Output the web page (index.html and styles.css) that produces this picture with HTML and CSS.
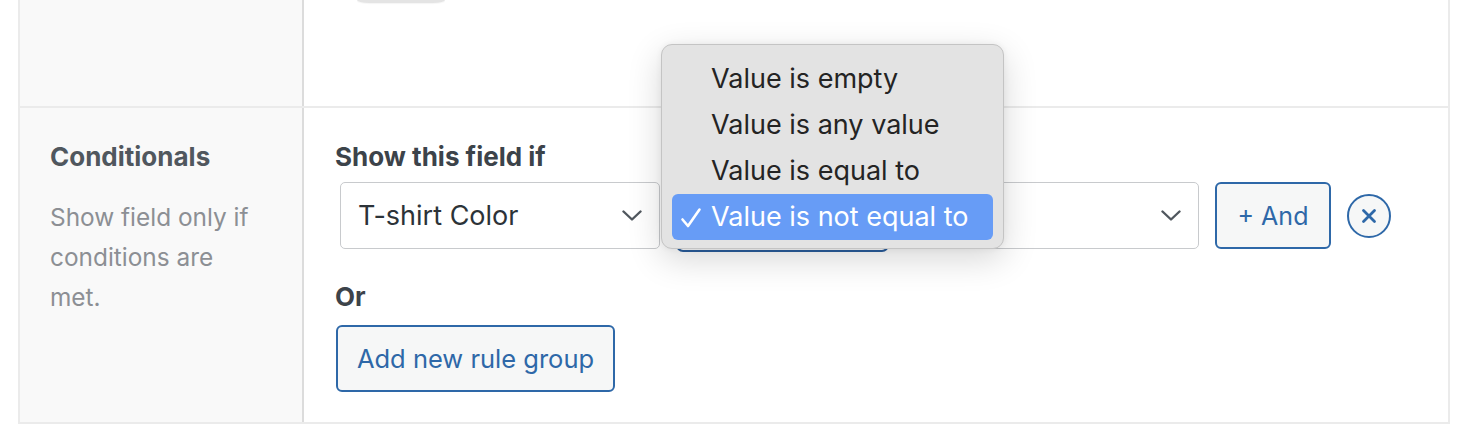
FILE: index.html
```html
<!DOCTYPE html>
<html lang="en">
<head>
<meta charset="utf-8">
<title>Conditionals</title>
<link rel="stylesheet" href="styles.css">
</head>
<body>
<div class="settings-table">
  <div class="row row-top">
    <div class="label-cell"></div>
    <div class="field-cell"><div class="pill-stub"></div></div>
  </div>
  <div class="row row-cond">
    <div class="label-cell">
      <div class="label-title">Conditionals</div>
      <p class="label-desc">Show field only if conditions are met.</p>
    </div>
    <div class="field-cell">
      <div class="group-title">Show this field if</div>
      <div class="rule-row">
        <div class="select select-field">
          <span class="select-text">T-shirt Color</span>
          <svg class="chev" width="20" height="11" viewBox="0 0 20 11"><path d="M1.5 1.5 L10 9.5 L18.5 1.5" fill="none" stroke="#50575e" stroke-width="2.4" stroke-linecap="round" stroke-linejoin="round"/></svg>
        </div>
        <div class="select select-op"></div>
        <div class="select select-value">
          <span class="select-text"></span>
          <svg class="chev" width="20" height="11" viewBox="0 0 20 11"><path d="M1.5 1.5 L10 9.5 L18.5 1.5" fill="none" stroke="#50575e" stroke-width="2.4" stroke-linecap="round" stroke-linejoin="round"/></svg>
        </div>
        <button class="btn btn-and">+ And</button>
        <button class="btn-remove" aria-label="Remove">
          <svg width="16" height="16" viewBox="0 0 16 16"><path d="M2.5 2.5 L13.5 13.5 M13.5 2.5 L2.5 13.5" stroke="#2e68a8" stroke-width="2.8" stroke-linecap="round"/></svg>
        </button>
        <div class="popup">
          <div class="popup-item">Value is empty</div>
          <div class="popup-item">Value is any value</div>
          <div class="popup-item">Value is equal to</div>
          <div class="popup-item selected">
            <svg class="check" width="22" height="22" viewBox="0 0 22 22"><path d="M2.5 12.5 L8 19 L19.5 2.5" fill="none" stroke="#ffffff" stroke-width="2.6" stroke-linecap="round" stroke-linejoin="round"/></svg>
            Value is not equal to
          </div>
        </div>
      </div>
      <div class="or-label">Or</div>
      <button class="btn btn-group">Add new rule group</button>
    </div>
  </div>
</div>
</body>
</html>
```

FILE: styles.css
```css
html, body {
  margin: 0;
  padding: 0;
  background: #ffffff;
}

body {
  font-family: Inter, "Noto Sans", "Liberation Sans", sans-serif;
  overflow: hidden;
}

.settings-table {
  margin-left: 18px;
  width: 1432px;
  box-sizing: border-box;
  border-left: 2px solid #ebebeb;
  border-right: 2px solid #ebebeb;
  border-bottom: 2px solid #ebebeb;
}

.row {
  display: flex;
}

.row-top {
  height: 106px;
}

.row-cond {
  border-top: 2px solid #ebebeb;
  height: 314px;
}

.label-cell {
  flex: none;
  background: #f9f9f9;
  border-right: 2px solid #dcdcdc;
  box-sizing: content-box;
  padding: 30px 0 0 30px;
  width: 252px;
}

.row-top .label-cell {
  padding: 0 0 0 30px;
}

.field-cell {
  flex: 1;
  padding: 30px 0 0 31px;
}

.row-top .field-cell {
  padding: 0 0 0 53px;
}

.pill-stub {
  width: 88px;
  height: 3px;
  background: #e4e4e4;
  border-radius: 0 0 12px 12px / 0 0 3px 3px;
  box-shadow: 0 1px 1px rgba(0, 0, 0, 0.04);
}

.label-title {
  font-size: 26px;
  font-weight: 700;
  line-height: 38px;
  color: #50575e;
}

.label-desc {
  margin: 21px 0 0 0;
  font-size: 24.4px;
  line-height: 40px;
  color: #8c8f94;
  width: 205px;
}

.group-title {
  font-size: 26px;
  font-weight: 700;
  line-height: 38px;
  color: #3c434a;
}

.rule-row {
  position: relative;
  display: flex;
  align-items: flex-start;
  gap: 16px;
  margin-top: 6px;
  padding-left: 5px;
}

.select {
  height: 67px;
  box-sizing: border-box;
  border: 1.5px solid #c8cacd;
  border-radius: 5px;
  background: #ffffff;
  display: flex;
  align-items: center;
  justify-content: space-between;
  padding: 0 17px 0 17px;
  flex: none;
}

.select-field {
  width: 320px;
}

.select-op {
  width: 213px;
  border: 2px solid #2b5f9e;
  height: 70px;
  border-radius: 7px;
}

.select-value {
  width: 294px;
}

.select-text {
  font-size: 27px;
  color: #2c3338;
}

.chev {
  display: block;
}

.btn {
  font-family: inherit;
  box-sizing: border-box;
  border: 2px solid #2e68a8;
  border-radius: 6px;
  background: #f6f7f7;
  color: #2e68a8;
  font-size: 25px;
  cursor: pointer;
  padding: 0;
}

.btn-and {
  width: 116px;
  height: 67px;
  flex: none;
}

.btn-remove {
  width: 44px;
  height: 44px;
  margin-top: 12px;
  flex: none;
  box-sizing: border-box;
  border: 2px solid #2e68a8;
  border-radius: 50%;
  background: #f6f7f7;
  display: flex;
  align-items: center;
  justify-content: center;
  padding: 0;
}

.btn-remove svg {
  display: block;
}

.or-label {
  margin-top: 26px;
  font-size: 26px;
  font-weight: 700;
  line-height: 38px;
  color: #3c434a;
}

.btn-group {
  display: block;
  margin-top: 9px;
  margin-left: 1px;
  width: 279px;
  height: 67px;
  font-size: 25.5px;
}

.popup {
  position: absolute;
  left: 326px;
  top: -138px;
  width: 343px;
  height: 205px;
  box-sizing: border-box;
  background: #e3e3e3;
  border: 1px solid #c4c4c4;
  border-radius: 11px;
  box-shadow: 0 10px 34px rgba(0, 0, 0, 0.16), 0 0 6px rgba(0, 0, 0, 0.06);
  padding: 11px 10px 0 10px;
}

.popup-item {
  position: relative;
  height: 46px;
  line-height: 46px;
  padding-left: 39px;
  font-size: 27px;
  color: #242424;
  border-radius: 6px;
}

.popup-item.selected {
  background: #679cf6;
  color: #ffffff;
}

.check {
  position: absolute;
  left: 8px;
  top: 13px;
}
```
